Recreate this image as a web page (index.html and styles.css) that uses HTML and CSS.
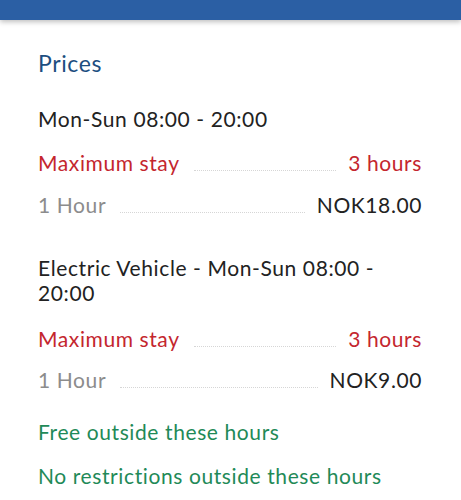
FILE: index.html
```html
<!DOCTYPE html>
<html lang="en">
<head>
  <meta charset="UTF-8">
  <meta name="viewport" content="width=device-width, initial-scale=1">
  <title>Prices</title>
  <link rel="stylesheet" href="styles.css">
</head>
<body>

  <div class="topbar"></div>

  <div class="content">
    <h2 class="title">Prices</h2>

    <div class="period">
      <p class="period-name">Mon-Sun 08:00 - 20:00</p>
      <div class="row limit">
        <span>Maximum stay</span>
        <span class="leader"></span>
        <span class="value">3 hours</span>
      </div>
      <div class="row price">
        <span>1 Hour</span>
        <span class="leader"></span>
        <span class="value">NOK18.00</span>
      </div>
    </div>

    <div class="period ev">
      <p class="period-name">Electric Vehicle - Mon-Sun 08:00 - 20:00</p>
      <div class="row limit">
        <span>Maximum stay</span>
        <span class="leader"></span>
        <span class="value">3 hours</span>
      </div>
      <div class="row price">
        <span>1 Hour</span>
        <span class="leader"></span>
        <span class="value">NOK9.00</span>
      </div>
    </div>

    <p class="note">Free outside these hours</p>
    <p class="note">No restrictions outside these hours</p>
  </div>

</body>
</html>
```

FILE: styles.css
```css
body {
  margin: 0;
  font-family: Lato, 'Open Sans', sans-serif;
  letter-spacing: 0.6px;
  background-color: #fff;
  color: #222;
  overflow: hidden;
}

.topbar {
  height: 20px;
  background-color: #2b5fa4;
  box-shadow: 0 2px 5px rgba(0,0,0,0.25);
}

.content {
  padding: 29px 39px 0 38px;
}

.title {
  margin: 0;
  font-size: 23px;
  font-weight: normal;
  line-height: 28px;
  color: #1d4e80;
}

p {
  margin: 0;
}

.period {
  margin-top: 29px;
}

.period.ev {
  margin-top: 38px;
}

.period-name {
  font-size: 21px;
  line-height: 25px;
  color: #222;
}

.row {
  display: flex;
  align-items: flex-end;
  font-size: 21px;
  line-height: 25px;
}

.row.limit {
  margin-top: 19px;
  color: #c4262e;
}

.ev .row.limit {
  margin-top: 21px;
}

.row.price {
  margin-top: 17px;
  color: #8c8c8c;
}

.ev .row.price {
  margin-top: 16px;
}

.row.price .value {
  color: #222;
}

.leader {
  flex: 1;
  margin: 0 12px 4px 14px;
  border-bottom: 1px dotted #d6d6d6;
}

.note {
  font-size: 21px;
  line-height: 25px;
  color: #1f8a58;
  margin-top: 27px;
}

.note + .note {
  margin-top: 19px;
}
```
